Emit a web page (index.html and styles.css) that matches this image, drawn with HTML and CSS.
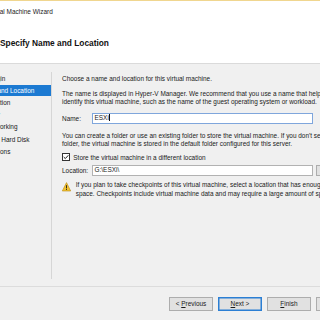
FILE: index.html
```html
<!DOCTYPE html>
<html lang="en">
 <head>
  <meta charset="utf-8" />
  <title>New Virtual Machine Wizard</title>
  <link rel="stylesheet" href="styles.css">
 </head>
 <body>
  <div class="window">
   <div class="titlebar">New Virtual Machine Wizard</div>
   <div class="header"><h1>Specify Name and Location</h1></div>
   <div class="main">
    <ul class="steps">
     <li>Before You Begin</li>
     <li class="current">Specify Name and Location</li>
     <li>Specify Generation</li>
     <li>Assign Memory</li>
     <li>Configure Networking</li>
     <li>Connect Virtual Hard Disk</li>
     <li>Installation Options</li>
     <li>Summary</li>
    </ul>
    <div class="page">
     <p>Choose a name and location for this virtual machine.</p>
     <p class="gap">The name is displayed in Hyper-V Manager. We recommend that you use a name that helps you easily<br>identify this virtual machine, such as the name of the guest operating system or workload.</p>
     <div class="row name-row">
      <span class="label">Name:</span>
      <div class="field focus">ESXi<span class="caret"></span></div>
     </div>
     <p class="gap-l">You can create a folder or use an existing folder to store the virtual machine. If you don't select a<br>folder, the virtual machine is stored in the default folder configured for this server.</p>
     <div class="check-row">
      <svg class="check" width="8" height="8" viewBox="0 0 8 8"><rect x=".5" y=".5" width="7" height="7" fill="#fff" stroke="#333"/><path d="M1.7 4l1.6 1.6 3-3.3" fill="none" stroke="#1a1a1a" stroke-width="1"/></svg>
      <span>Store the virtual machine in a different location</span>
     </div>
     <div class="row loc-row">
      <span class="label">Location:</span>
      <div class="field">G:\ESXi\</div>
      <button type="button" class="browse">Browse...</button>
     </div>
     <div class="warn">
      <svg class="warn-icon" width="9" height="10" viewBox="0 0 9 10"><path d="M4.5 .6L8.7 9H.3z" fill="#f2c230" stroke="#b98a14" stroke-width=".6" stroke-linejoin="round"/><rect x="4.05" y="3.2" width=".9" height="3.2" fill="#1a1a1a"/><rect x="4.05" y="7" width=".9" height=".9" fill="#1a1a1a"/></svg>
      <p>If you plan to take checkpoints of this virtual machine, select a location that has enough free<br>space. Checkpoints include virtual machine data and may require a large amount of space.</p>
     </div>
    </div>
   </div>
   <div class="footer">
    <button type="button">&lt; <u>P</u>revious</button>
    <button type="button" class="default"><u>N</u>ext &gt;</button>
    <button type="button"><u>F</u>inish</button>
    <button type="button">Cancel</button>
   </div>
  </div>
 </body>
</html>
```

FILE: styles.css
```css
* { box-sizing: border-box; }
body {
  margin: 0;
  width: 320px;
  height: 320px;
  overflow: hidden;
  background-color: #f0f0f0;
  color: #1a1a1a;
  font-family: "Liberation Sans", Arial, sans-serif;
  font-size: 6.45px;
}
.window {
  margin-left: -60px;
  width: 440px;
}
.titlebar {
  height: 23px;
  line-height: 22px;
  padding-left: 32px;
  border-top: 1px solid #f0d68f;
  background-color: #fff;
  color: #222;
}
.header {
  height: 41px;
  padding-left: 60px;
  background-color: #fff;
  border-bottom: 1px solid #dadada;
}
.header h1 {
  margin: 0;
  font-size: 8.35px;
  line-height: 40px;
  font-weight: bold;
  color: #111;
}
.main {
  display: flex;
  height: 222px;
}
.steps {
  list-style: none;
  margin: 8px 0 7px;
  padding: 0;
  width: 112px;
  border-right: 1px solid #d6d6d6;
}
.steps li {
  height: 11px;
  line-height: 11px;
  margin: 1.1px 0;
  padding-left: 15.6px;
  white-space: nowrap;
}
.steps li.current {
  background-color: #1c7ad2;
  color: #fff;
}
.page {
  padding: 11px 0 0 10px;
}
p {
  margin: 0;
  line-height: 8.6px;
  white-space: nowrap;
}
.gap { margin-top: 6.1px; }
.gap-l { margin-top: 7.7px; }
.row {
  display: flex;
  align-items: center;
}
.name-row { margin-top: 6.4px; }
.loc-row { margin-top: 3.6px; }
.label {
  width: 30px;
}
.field {
  width: 221.3px;
  height: 10.6px;
  line-height: 8.6px;
  padding: 0 1.5px;
  background-color: #fff;
  border: 1px solid #b2b2b2;
  white-space: nowrap;
}
.field.focus {
  border-color: #7fa6dc;
}
.caret {
  display: inline-block;
  width: 1px;
  height: 7px;
  margin-left: .5px;
  vertical-align: -1px;
  background-color: #111;
}
.browse {
  margin-left: 3px;
  width: 40px;
  height: 11.4px;
  padding: 0 0 0 8px;
  text-align: left;
  font-family: inherit;
  font-size: 6.45px;
  color: #1a1a1a;
  background-color: #e1e1e1;
  border: 1px solid #adadad;
}
.check-row {
  display: flex;
  align-items: center;
  margin-top: 4.5px;
  height: 8px;
}
.check {
  margin-right: 3.3px;
  width: 8px;
  height: 8px;
}
.warn {
  display: flex;
  margin-top: 5px;
}
.warn-icon {
  margin: .3px 4.7px 0 0;
  flex: none;
}
.footer {
  height: 40px;
  border-top: 1px solid #dcdcdc;
  padding: 10.3px 0 0 229.3px;
  display: flex;
  gap: 5.6px;
}
.footer button {
  width: 43.4px;
  height: 13.4px;
  padding: 0;
  font-family: inherit;
  font-size: 6.45px;
  color: #1a1a1a;
  background-color: #e1e1e1;
  border: 1px solid #adadad;
}
.footer button.default {
  border-color: #2b7fd4;
  box-shadow: inset 0 0 0 .5px #2b7fd4;
}
```
